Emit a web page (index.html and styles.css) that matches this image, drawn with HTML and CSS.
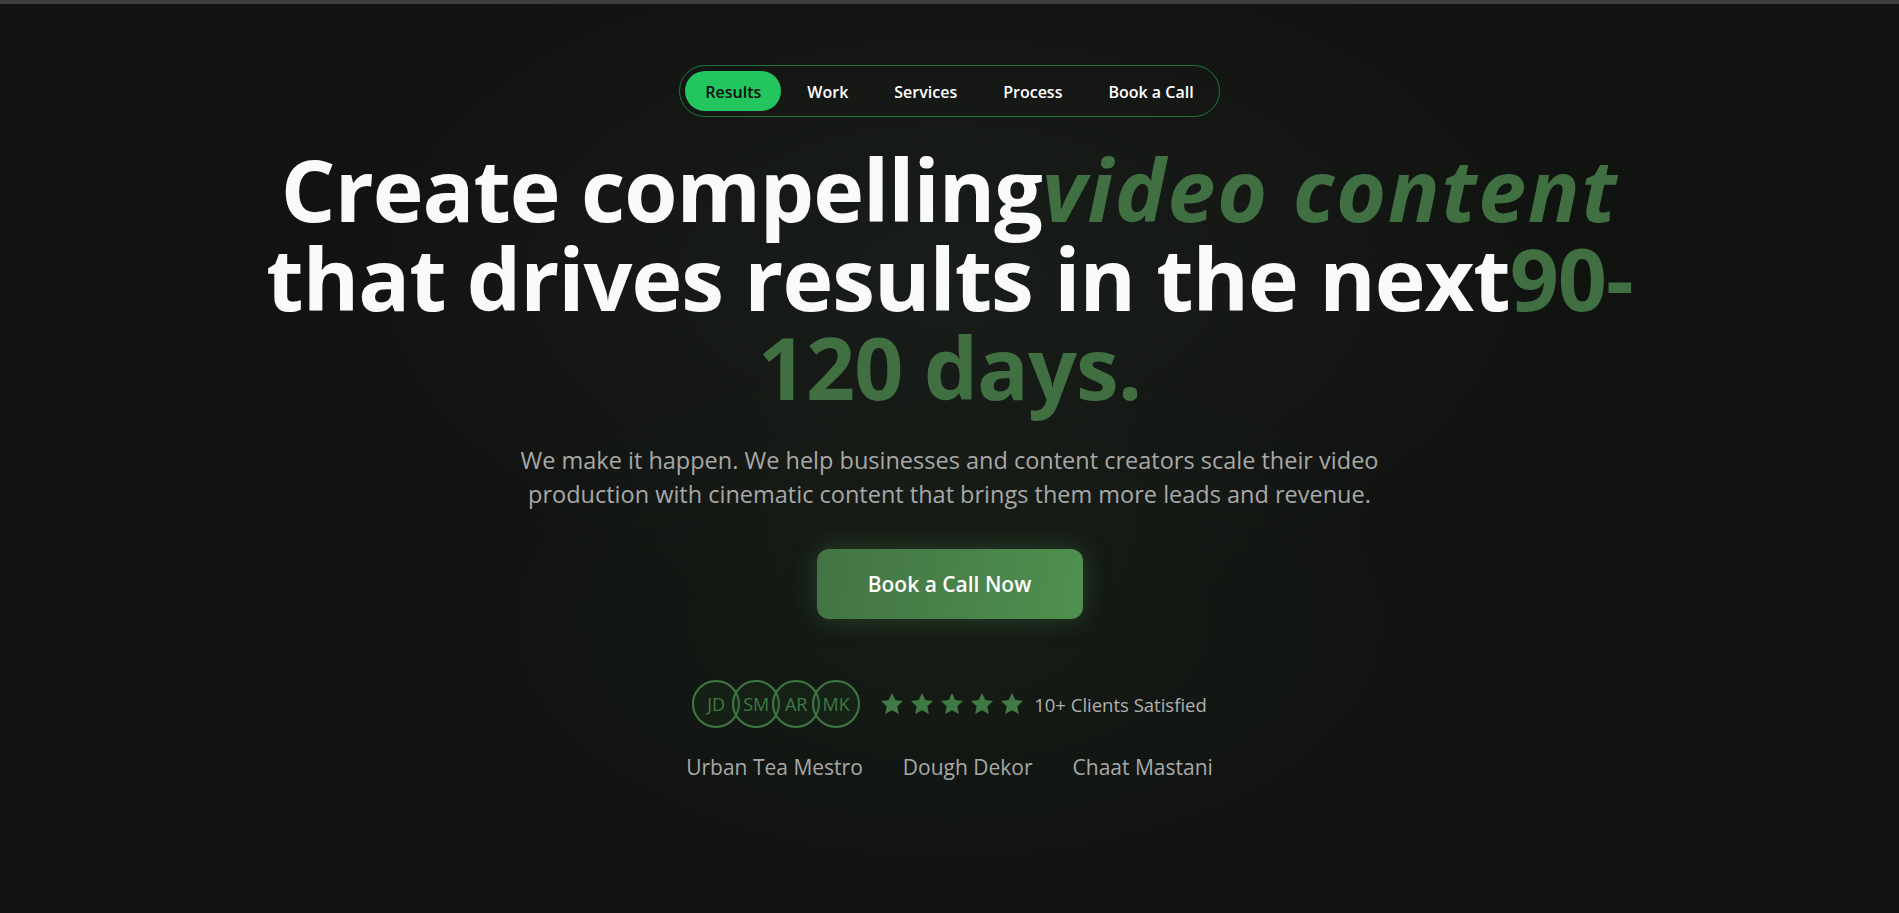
FILE: index.html
```html
<!DOCTYPE html>
<html lang="en">
<head>
<meta charset="utf-8">
<title>Video Content Agency</title>
<link rel="stylesheet" href="styles.css">
</head>
<body>
<div class="topbar"></div>
<main class="hero">
  <nav class="nav">
    <a class="nav-item active" href="#">Results</a>
    <a class="nav-item" href="#">Work</a>
    <a class="nav-item" href="#">Services</a>
    <a class="nav-item" href="#">Process</a>
    <a class="nav-item" href="#">Book a Call</a>
  </nav>
  <h1 class="title">Create compelling<em class="accent">video content</em><br>that drives results in the next<span class="accent">90-<wbr>120 days.</span></h1>
  <p class="lead">We make it happen. We help businesses and content creators scale their video production with cinematic content that brings them more leads and revenue.</p>
  <a class="cta" href="#">Book a Call Now</a>
  <div class="proof">
    <div class="avatars">
      <span class="avatar">JD</span><span class="avatar">SM</span><span class="avatar">AR</span><span class="avatar">MK</span>
    </div>
    <div class="stars">
      <svg viewBox="0 0 24 24"><path d="M12 2.5l2.9 6.1 6.6.8-4.9 4.6 1.3 6.6L12 17.3l-5.9 3.3 1.3-6.6-4.9-4.6 6.6-.8z"/></svg>
      <svg viewBox="0 0 24 24"><path d="M12 2.5l2.9 6.1 6.6.8-4.9 4.6 1.3 6.6L12 17.3l-5.9 3.3 1.3-6.6-4.9-4.6 6.6-.8z"/></svg>
      <svg viewBox="0 0 24 24"><path d="M12 2.5l2.9 6.1 6.6.8-4.9 4.6 1.3 6.6L12 17.3l-5.9 3.3 1.3-6.6-4.9-4.6 6.6-.8z"/></svg>
      <svg viewBox="0 0 24 24"><path d="M12 2.5l2.9 6.1 6.6.8-4.9 4.6 1.3 6.6L12 17.3l-5.9 3.3 1.3-6.6-4.9-4.6 6.6-.8z"/></svg>
      <svg viewBox="0 0 24 24"><path d="M12 2.5l2.9 6.1 6.6.8-4.9 4.6 1.3 6.6L12 17.3l-5.9 3.3 1.3-6.6-4.9-4.6 6.6-.8z"/></svg>
    </div>
    <span class="proof-text">10+ Clients Satisfied</span>
  </div>
  <ul class="clients">
    <li>Urban Tea Mestro</li>
    <li>Dough Dekor</li>
    <li>Chaat Mastani</li>
  </ul>
</main>
</body>
</html>
```

FILE: styles.css
```css
* { box-sizing: border-box; }
html, body { margin: 0; padding: 0; }
body {
  min-height: 913px;
  background-color: #111311;
  background-image:
    radial-gradient(ellipse 700px 380px at 50% 68%, rgba(60,110,60,0.10), rgba(0,0,0,0) 70%),
    radial-gradient(ellipse 900px 500px at 50% 30%, rgba(40,48,40,0.35), rgba(0,0,0,0) 70%);
  font-family: "Open Sans", "Noto Sans", sans-serif;
  color: #fafafa;
}
.topbar { height: 4px; background: #3e3e3e; }
.hero {
  display: flex;
  flex-direction: column;
  align-items: center;
  padding-top: 61px;
  text-align: center;
}
.nav {
  display: flex;
  gap: 6px;
  padding: 5px;
  border: 1px solid rgba(34,197,94,0.55);
  border-radius: 999px;
}
.nav-item {
  display: flex;
  align-items: center;
  height: 40px;
  padding: 1px 20px 0;
  border-radius: 999px;
  color: #ffffff;
  font-size: 16px;
  font-weight: 600;
  text-decoration: none;
}
.nav-item.active { background: #22c55e; color: #0c0c0c; }
.title {
  margin: 27px 0 0;
  max-width: 1420px;
  font-size: 86px;
  line-height: 89px;
  letter-spacing: -1px;
  font-weight: 700;
  color: #fafafa;
}
.accent { color: #407042; }
em.accent { font-style: italic; letter-spacing: 1.6px; }
.lead {
  margin: 32px 0 0;
  max-width: 900px;
  font-size: 23.5px;
  line-height: 34px;
  color: #a8a8a8;
}
.cta {
  margin-top: 38px;
  display: flex;
  align-items: center;
  justify-content: center;
  width: 266px;
  height: 70px;
  border-radius: 12px;
  background: linear-gradient(100deg, #437344, #4f904f);
  box-shadow: 0 0 26px rgba(79,144,79,0.35);
  color: #fff;
  font-size: 21px;
  font-weight: 600;
  text-decoration: none;
}
.proof {
  margin-top: 61px;
  display: flex;
  align-items: center;
  gap: 8px;
}
.avatars { display: flex; }
.avatar {
  width: 48px; height: 48px;
  border-radius: 50%;
  border: 2px solid #3f7a44;
  background: rgba(40,80,40,0.18);
  color: #3f7a44;
  font-size: 18px;
  display: flex; align-items: center; justify-content: center;
  margin-left: -8px;
}
.avatar:first-child { margin-left: 0; }
.stars { display: flex; gap: 2px; margin-left: 10px; }
.stars svg { width: 28px; height: 28px; fill: #3f7a44; }
.proof-text { font-size: 18.5px; color: #b0b0b0; }
.clients {
  list-style: none;
  margin: 25px 0 0;
  padding: 0;
  display: flex;
  gap: 40px;
  font-size: 21px;
  color: #a8a8a8;
}
```
